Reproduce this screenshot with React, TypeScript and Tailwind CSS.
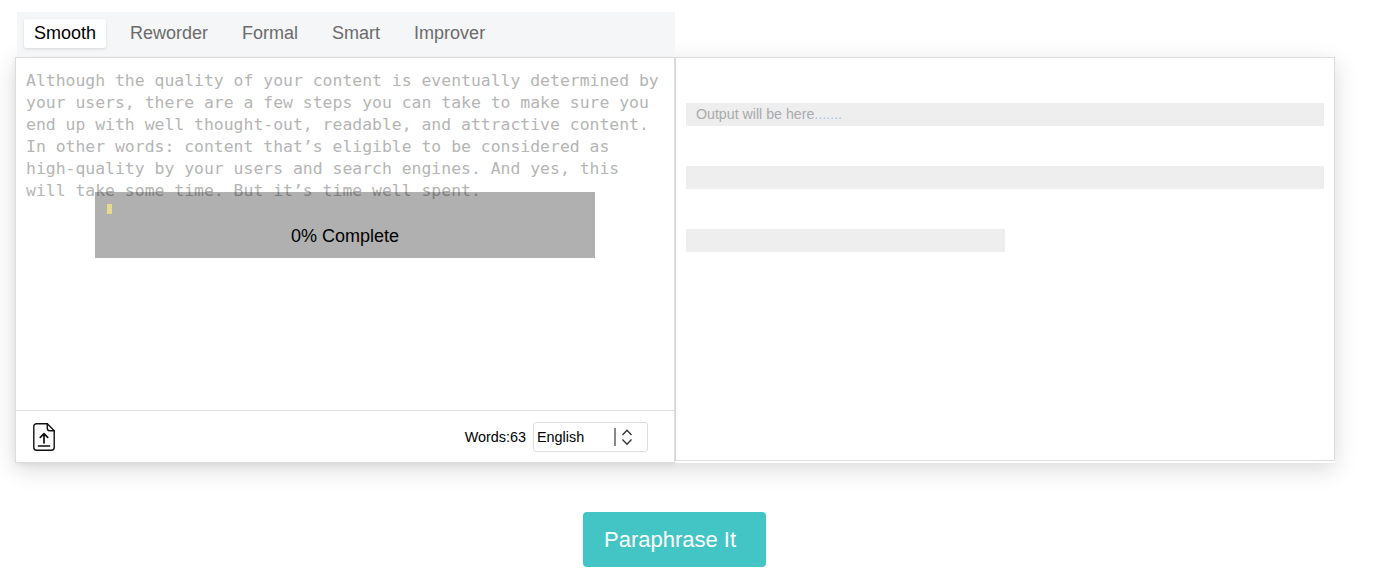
const tabs = ['Smooth', 'Reworder', 'Formal', 'Smart', 'Improver']

const sampleText =
  'Although the quality of your content is eventually determined by your users, there are a few steps you can take to make sure you end up with well thought-out, readable, and attractive content. In other words: content that’s eligible to be considered as high-quality by your users and search engines. And yes, this will take some time. But it’s time well spent.'

function UploadIcon() {
  return (
    <svg width="22" height="28" viewBox="0 0 22 28" fill="none" stroke="#111" strokeWidth="1.4" strokeLinejoin="round" strokeLinecap="round">
      <path d="M3.5 0.8h10.8L21.2 7.7V24.5a2.7 2.7 0 0 1-2.7 2.7H3.5a2.7 2.7 0 0 1-2.7-2.7V3.5a2.7 2.7 0 0 1 2.7-2.7z" />
      <path d="M14.3 0.8v4.4a2.5 2.5 0 0 0 2.5 2.5h4.4" />
      <path d="M11 20V11M7.3 14.3L11 10.6L14.7 14.3" strokeWidth="1.7" />
      <path d="M5.5 23h11" strokeWidth="1.7" />
    </svg>
  )
}

function SelectArrows() {
  return (
    <svg width="12" height="18" viewBox="0 0 12 18" fill="none" stroke="#333" strokeWidth="1.3">
      <path d="M1.5 7L6 2.2L10.5 7" />
      <path d="M1.5 11.5L6 16.3L10.5 11.5" />
    </svg>
  )
}

function OutputLine({ short, children }: { short?: boolean; children?: React.ReactNode }) {
  return (
    <div className={`h-[23px] bg-[#eeeeee] pl-[10px] text-[14.2px] leading-[23px] text-[#aaaaaa] ${short ? 'w-[319px]' : 'w-full'}`}>
      {children}
    </div>
  )
}

export default function App() {
  return (
    <div className="min-h-[574px] bg-white pl-[15px] pt-[12px] text-black font-['Liberation_Sans',Arial,sans-serif]">
      <div className="relative z-10 ml-[2px] flex h-[44px] w-[658px] items-start gap-[14px] bg-[#f5f6f8] pl-[7px] pt-[7px] mb-[1px]">
        {tabs.map((tab, i) => (
          <div
            key={tab}
            className={`h-[29px] rounded-[2px] px-[10px] text-[18px] leading-[29px] ${
              i === 0 ? 'bg-white text-black shadow-[0_1px_3px_rgba(0,0,0,0.12)]' : 'text-[#6b6b6b]'
            }`}
          >
            {tab}
          </div>
        ))}
      </div>

      <div className="flex w-[1320px] items-start shadow-[0_6px_22px_rgba(0,0,0,0.15)]">
        <div className="relative flex h-[406px] w-[660px] flex-col border border-[#dddddd] bg-white shadow-[0_2px_6px_rgba(0,0,0,0.06)]">
          <div className="h-[352px] px-[10px] pt-[12px] font-['DejaVu_Sans_Mono',monospace] text-[16.43px] leading-[22px] text-[#b5b5b5]">
            {sampleText}
          </div>

          <div className="absolute left-[79px] top-[134px] h-[66px] w-[500px] bg-[rgba(0,0,0,0.31)]">
            <div className="absolute left-[12px] top-[12px] h-[10px] w-[5px] bg-[#e6da8e]" />
            <div className="pt-[33px] text-center text-[18px] leading-[22px]">0% Complete</div>
          </div>

          <div className="flex h-[52px] items-center justify-between border-t border-[#dddddd] pl-[17px] pr-[26px]">
            <UploadIcon />
            <div className="flex items-center gap-[7px] text-[14.4px] leading-[30px]">
              <span className="pt-[1px]">Words:63</span>
              <div className="flex h-[30px] w-[115px] items-center rounded-[3px] border border-[#dddddd] pl-[3px]">
                <span className="w-[77px] pt-[1px]">English</span>
                <span className="h-[18px] w-[2px] bg-[#888888]" />
                <span className="ml-[5px] flex">
                  <SelectArrows />
                </span>
              </div>
            </div>
          </div>
        </div>

        <div className="flex h-[404px] w-[660px] flex-col gap-[40px] border border-[#dddddd] bg-white px-[10px] pt-[45px]">
          <OutputLine>
            Output will be here<span className="text-[#a9c6e0]">.......</span>
          </OutputLine>
          <OutputLine />
          <OutputLine short />
        </div>
      </div>

      <div className="mt-[49px] flex w-[1319px] justify-center">
        <button type="button" className="h-[55px] w-[183px] rounded-[4px] bg-[#43c5c5] pl-[21px] text-left text-[22px] text-white">
          Paraphrase It
        </button>
      </div>
    </div>
  )
}
